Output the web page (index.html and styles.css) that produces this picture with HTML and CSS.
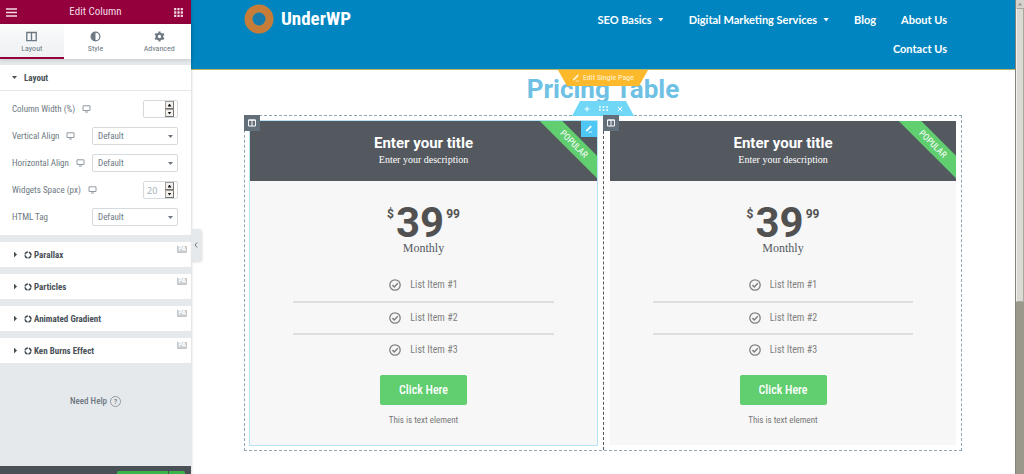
FILE: index.html
```html
<!DOCTYPE html>
<html lang="en">
<head>
<meta charset="utf-8">
<title>Edit Column</title>
<link rel="stylesheet" href="styles.css">
</head>
<body>
<svg class="defs" aria-hidden="true">
  <symbol id="columns" viewBox="0 0 10 10"><path d="M.7 1.2h8.6v7.6H.7zM5 1v8M.5 1.4h9" fill="none" stroke="currentColor" stroke-width="1.2"/></symbol>
  <symbol id="monitor" viewBox="0 0 9 8"><path d="M1 .8h7v4.7H1zM3 7h3" fill="none" stroke="currentColor" stroke-width="1"/></symbol>
  <symbol id="pencil" viewBox="0 0 10 10"><path d="M1 8.2l.6-2.2L7 .6l1.6 1.6L3.2 7.6z" fill="currentColor"/><path d="M4.5 8.8H9" stroke="currentColor"/></symbol>
  <symbol id="premium" viewBox="0 0 10 10"><circle cx="5" cy="5" r="3.7" fill="none" stroke="currentColor" stroke-width="2" stroke-dasharray="4.6 1.21" stroke-dashoffset="-.6"/></symbol>
  <symbol id="check" viewBox="0 0 12 12"><circle cx="6" cy="6" r="5.2" fill="none" stroke="currentColor" stroke-width="1.3"/><path d="M3.4 6.1l1.9 1.9 3.5-3.7" fill="none" stroke="currentColor" stroke-width="1.5"/></symbol>
</svg>
<div class="app">
  <aside class="panel">
    <header class="panel-head">
      <button class="icon-btn" aria-label="Menu"><svg width="11" height="9" viewBox="0 0 11 9"><path d="M0 1h11M0 4.5h11M0 8h11" stroke="currentColor" stroke-width="1.6"/></svg></button>
      <h1>Edit Column</h1>
      <button class="icon-btn" aria-label="Widgets"><svg width="9" height="9" viewBox="0 0 9 9"><path d="M1.2 0v9M4.5 0v9M7.8 0v9" stroke="currentColor" stroke-width="2.2" stroke-dasharray="2.3 1.05"/></svg></button>
    </header>
    <nav class="tabs">
      <button class="tab active"><svg width="11" height="11"><use href="#columns"/></svg>Layout</button>
      <button class="tab"><svg width="11" height="11" viewBox="0 0 10 10"><circle cx="5" cy="5" r="4" fill="none" stroke="currentColor" stroke-width="1.1"/><path d="M5 1a4 4 0 0 0 0 8z" fill="currentColor"/></svg>Style</button>
      <button class="tab"><svg width="11" height="11" viewBox="0 0 10 10"><circle cx="5" cy="5" r="2.5" fill="none" stroke="currentColor" stroke-width="2"/><path d="M5 .4v2M5 7.6v2M1 2.7l1.8 1M7.2 6.3l1.8 1M1 7.3l1.8-1M7.2 3.7l1.8-1" stroke="currentColor" stroke-width="2"/></svg>Advanced</button>
    </nav>
    <div class="sections">
      <section class="section open">
        <h2 class="section-title"><i class="arrow down"></i>Layout</h2>
        <div class="controls">
          <div class="control"><label for="width">Column Width (%)</label><svg class="device" width="9" height="8"><use href="#monitor"/></svg>
            <span class="number"><input id="width" type="text" inputmode="numeric"><span class="spin"><button aria-label="Increase width"><i class="tri up"></i></button><button aria-label="Decrease width"><i class="tri"></i></button></span></span></div>
          <div class="control"><label for="valign">Vertical Align</label><svg class="device" width="9" height="8"><use href="#monitor"/></svg>
            <span class="select"><select id="valign"><option>Default</option></select></span></div>
          <div class="control"><label for="halign">Horizontal Align</label><svg class="device" width="9" height="8"><use href="#monitor"/></svg>
            <span class="select"><select id="halign"><option>Default</option></select></span></div>
          <div class="control"><label for="space">Widgets Space (px)</label><svg class="device" width="9" height="8"><use href="#monitor"/></svg>
            <span class="number"><input id="space" type="text" inputmode="numeric" placeholder="20"><span class="spin"><button aria-label="Increase space"><i class="tri up"></i></button><button aria-label="Decrease space"><i class="tri"></i></button></span></span></div>
          <div class="control"><label for="tag">HTML Tag</label>
            <span class="select"><select id="tag"><option>Default</option></select></span></div>
        </div>
      </section>
      <section class="section"><h2 class="section-title"><i class="arrow"></i><svg width="8" height="8"><use href="#premium"/></svg>Parallax<span class="pa">PA</span></h2></section>
      <section class="section"><h2 class="section-title"><i class="arrow"></i><svg width="8" height="8"><use href="#premium"/></svg>Particles<span class="pa">PA</span></h2></section>
      <section class="section"><h2 class="section-title"><i class="arrow"></i><svg width="8" height="8"><use href="#premium"/></svg>Animated Gradient<span class="pa">PA</span></h2></section>
      <section class="section"><h2 class="section-title"><i class="arrow"></i><svg width="8" height="8"><use href="#premium"/></svg>Ken Burns Effect<span class="pa">PA</span></h2></section>
    </div>
    <a class="help" href="#">Need Help <span class="help-mark">?</span></a>
    <footer class="panel-foot"><span class="publish"></span><span class="publish more"></span></footer>
    <button class="collapse" aria-label="Hide panel"><svg width="4" height="6" viewBox="0 0 4 6"><path d="M3.2.5L1 3l2.2 2.5" fill="none" stroke="currentColor"/></svg></button>
  </aside>

  <main class="preview">
    <header class="site-head">
      <div class="container head-row">
        <a class="brand" href="#"><svg width="30" height="30" viewBox="0 0 30 30"><circle cx="15" cy="15" r="10.5" fill="none" stroke="#c67d39" stroke-width="8"/><circle cx="15" cy="15" r="5.2" fill="none" stroke="#27759c" stroke-width="1"/><path d="M10.8 12h3M15 12h3M11.7 12.2l2.3 6 1.3-4M13.8 12.2l2.7 6 1.7-5.7" fill="none" stroke="#27759c" stroke-width="1.3"/></svg>UnderWP</a>
        <nav class="menu">
          <a href="#">SEO Basics<i class="caret"></i></a>
          <a href="#">Digital Marketing Services<i class="caret"></i></a>
          <a href="#">Blog</a>
          <a href="#">About Us</a>
          <a href="#">Contact Us</a>
        </nav>
      </div>
    </header>
    <div class="content">
      <h2 class="page-title">Pricing Table</h2>
      <button class="edit-page"><svg width="8" height="8"><use href="#pencil"/></svg>Edit Single Page</button>
      <div class="container pricing">
        <div class="section-tools">
          <button aria-label="Add section"><svg width="6" height="6" viewBox="0 0 6 6"><path d="M3 .5v5M.5 3h5" stroke="currentColor"/></svg></button>
          <button aria-label="Edit section"><svg width="9" height="5" viewBox="0 0 9 5"><path d="M0 1h9M0 4h9" stroke="currentColor" stroke-width="1.4" stroke-dasharray="1.8 1.8"/></svg></button>
          <button aria-label="Delete section"><svg width="6" height="6" viewBox="0 0 6 6"><path d="M.8 .8l4.4 4.4M5.2 .8L.8 5.2" stroke="currentColor"/></svg></button>
        </div>
        <div class="column selected">
          <button class="grip" aria-label="Edit column"><svg width="8" height="8"><use href="#columns"/></svg></button>
          <article class="card">
            <button class="widget-edit" aria-label="Edit pricing table"><svg width="8" height="8"><use href="#pencil"/></svg></button>
            <header class="card-head"><h3>Enter your title</h3><p>Enter your description</p><span class="ribbon">POPULAR</span></header>
            <div class="price"><span class="sign">$</span><span class="amount">39</span><span class="cents">99</span></div>
            <p class="period">Monthly</p>
            <ul class="features">
              <li><svg width="12" height="12"><use href="#check"/></svg>List Item #1</li>
              <li><svg width="12" height="12"><use href="#check"/></svg>List Item #2</li>
              <li><svg width="12" height="12"><use href="#check"/></svg>List Item #3</li>
            </ul>
            <a class="cta" href="#">Click Here</a>
            <p class="note">This is text element</p>
          </article>
        </div>
        <div class="column">
          <button class="grip" aria-label="Edit column"><svg width="8" height="8"><use href="#columns"/></svg></button>
          <article class="card">
            <header class="card-head"><h3>Enter your title</h3><p>Enter your description</p><span class="ribbon">POPULAR</span></header>
            <div class="price"><span class="sign">$</span><span class="amount">39</span><span class="cents">99</span></div>
            <p class="period">Monthly</p>
            <ul class="features">
              <li><svg width="12" height="12"><use href="#check"/></svg>List Item #1</li>
              <li><svg width="12" height="12"><use href="#check"/></svg>List Item #2</li>
              <li><svg width="12" height="12"><use href="#check"/></svg>List Item #3</li>
            </ul>
            <a class="cta" href="#">Click Here</a>
            <p class="note">This is text element</p>
          </article>
        </div>
      </div>
    </div>
  </main>
  <div class="scrollbar" aria-hidden="true"><span class="scroll-up"><i class="tri up"></i></span><span class="thumb"></span></div>
</div>
</body>
</html>
```
FILE: styles.css
```css
* { box-sizing: border-box; }
body { margin: 0; font-family: Roboto, "Liberation Sans", sans-serif; background: #fff; }
h1, h2, h3, p, ul { margin: 0; padding: 0; }
button { border: 0; padding: 0; background: none; color: inherit; font: inherit; }
a { color: inherit; text-decoration: none; }
svg { display: block; flex: none; }
.defs { position: absolute; width: 0; height: 0; }
.app { display: flex; height: 100vh; overflow: hidden; }
.panel, .edit-page, .ribbon, .features, .cta, .note { font-family: "Roboto Condensed", Roboto, sans-serif; }

/* Editor panel */
.panel { position: relative; z-index: 5; flex: none; width: 191px; display: flex; flex-direction: column; background: #e6e9ec; box-shadow: 0 0 3px rgba(0,0,0,.25); color: #6d7882; font-size: 9px; }
.panel-head { display: flex; flex: none; align-items: center; justify-content: space-between; height: 24px; padding: 0 8px 0 6px; background: #93003c; color: #f3dbe4; }
.panel-head h1 { font-size: 11px; font-weight: 400; line-height: 22px; }
.icon-btn { display: flex; }
.tabs { display: grid; flex: none; grid-template-columns: repeat(3, 1fr); height: 35px; background: #fff; box-shadow: 0 1px 4px rgba(0,0,0,.15); }
.tab { display: flex; flex-direction: column; align-items: center; gap: 2px; padding-top: 7px; font-size: 8px; line-height: 10px; }
.tab.active { background: linear-gradient(#fafbfb, #eef0f2); border-bottom: 2px solid #93003c; }
.sections { display: grid; gap: 7px; margin-top: 6px; }
.section { background: #fff; }
.section-title { display: flex; align-items: center; gap: 2px; height: 25px; padding: 0 4px 0 14px; color: #495157; font-size: 9px; font-weight: 700; line-height: 12px; }
.open .section-title { border-bottom: 1px solid #e6e9ec; height: 26px; padding-left: 12px; }
.arrow { width: 3px; height: 6px; margin-right: 5px; background: currentColor; clip-path: polygon(0 0, 100% 50%, 0 100%); }
.arrow.down { width: 5px; height: 3px; clip-path: polygon(0 0, 100% 0, 50% 100%); }
.pa { align-self: flex-start; margin: 4px 0 0 auto; padding: 0 1px; background: #c6c9cb; color: #fff; font-size: 7px; line-height: 7px; }
.controls { display: grid; gap: 9px; padding: 9px 13px 9px 12px; }
.control { display: flex; align-items: center; height: 18px; white-space: nowrap; }
.device { margin-left: 7px; color: #929ba3; }
.select, .number { position: relative; display: flex; height: 18px; margin-left: auto; border: 1px solid #d5dadf; border-radius: 2px; background: #fff; }
.select { width: 86px; }
.select::after { content: ""; position: absolute; right: 4px; top: 7px; width: 5px; height: 3px; background: #6d7882; clip-path: polygon(0 0, 100% 0, 50% 100%); pointer-events: none; }
.select select { appearance: none; width: 100%; border: 0; padding: 0 5px; background: none; color: #6d7882; font: inherit; outline: 0; }
.number { width: 35px; padding-right: 3px; }
.number input { width: 21px; min-width: 0; border: 0; padding: 0 3px; background: none; font: 9px "Noto Sans", sans-serif; color: #6d7882; outline: 0; }
.number input::placeholder { color: #a4afb7; }
.spin { display: grid; flex: 1; grid-template-rows: 1fr 1fr; }
.spin button { display: grid; place-items: center; border: 1px solid #a29e95; border-right-color: #77736d; border-bottom-color: #77736d; background: #f2f1ef; }
.tri { width: 4px; height: 3px; background: #111; clip-path: polygon(0 0, 100% 0, 50% 100%); }
.tri.up { clip-path: polygon(50% 0, 100% 100%, 0 100%); }
.help { display: flex; align-items: center; justify-content: center; gap: 3px; margin-top: 32px; font-weight: 500; line-height: 12px; }
.help-mark { width: 11px; height: 11px; border: 1px solid #929ba3; border-radius: 50%; font-size: 8px; line-height: 9px; text-align: center; }
.panel-foot { display: flex; flex: none; gap: 1px; justify-content: flex-end; height: 8px; margin-top: auto; padding: 5px 6px 0 0; background: #495157; }
.publish { width: 51px; background: #39b54a; border-top-left-radius: 2px; }
.publish.more { width: 16px; border-radius: 0 2px 0 0; }
.collapse { position: absolute; left: 100%; top: 229px; display: grid; place-items: center; width: 10px; height: 32px; background: #e6e9ec; border-radius: 0 2px 2px 0; box-shadow: 1px 1px 3px rgba(0,0,0,.15); }

/* Site preview */
.preview { flex: 1; min-width: 0; }
.container { width: calc(100% - 32px); max-width: 718px; margin: 0 auto; }
.site-head { background: #0085c0; border-bottom: 1px solid #b5b565; color: #fff; }
.head-row { display: flex; justify-content: space-between; align-items: flex-start; padding: 4px 15px 6px 0; }
.brand { display: flex; align-items: center; gap: 7px; font: 700 19px/30px "Roboto Condensed", Roboto, sans-serif; }
.menu { display: flex; flex: 0 1 380px; flex-wrap: wrap; justify-content: flex-end; gap: 0 25px; padding-top: 1px; font: 700 11px/29px Lato, sans-serif; }
.menu a { display: flex; align-items: center; }
.caret { width: 6px; height: 4px; margin-left: 6px; background: currentColor; clip-path: polygon(0 0, 100% 0, 50% 100%); }
.content { position: relative; }
.page-title { padding: 4px 0 11px; color: #6ec1e4; font-size: 26px; font-weight: 700; line-height: 30px; text-align: center; }
.edit-page { position: absolute; top: 0; left: 50%; transform: translateX(-50%); display: flex; align-items: center; justify-content: center; gap: 3px; width: 90px; height: 16px; background: #fcb92c; clip-path: polygon(0 0, 100% 0, 90% 100%, 10% 100%); color: #fff4d8; font-size: 8px; line-height: 16px; white-space: nowrap; }
.pricing { position: relative; display: grid; grid-template-columns: 1fr 1fr; border: 1px dashed #93a6b1; }
.section-tools { position: absolute; bottom: 100%; left: 50%; transform: translateX(-50%); display: flex; align-items: center; justify-content: center; gap: 9px; width: 62px; height: 15px; background: #71d7f7; clip-path: polygon(13% 0, 87% 0, 100% 100%, 0 100%); color: #fff; }
.column { position: relative; min-width: 0; padding: 5px 6px 5px 5px; }
.column + .column { border-left: 1px dashed #515962; padding: 5px 5px 5px 6px; }
.grip, .widget-edit { position: absolute; z-index: 2; display: grid; place-items: center; width: 16px; height: 16px; color: #fff; }
.grip { top: -1px; left: -1px; background: #626e79; }
.widget-edit { top: 0; right: 0; background: #4fc7f5; }
.card { position: relative; display: flex; flex-direction: column; align-items: center; padding-bottom: 18px; background: #f7f7f7; color: #54595f; }
.selected .card { outline: 1px solid #b5e5f5; }
.card-head { position: relative; overflow: hidden; align-self: stretch; height: 60px; padding-top: 12px; background: #54595f; color: #fff; text-align: center; }
.card-head h3 { font-size: 15px; font-weight: 700; line-height: 20px; }
.card-head p { font: 10px/14px "Roboto Slab", "Liberation Serif", serif; }
.ribbon { position: absolute; top: 15px; right: -27px; width: 100px; height: 16px; background: #61ce70; transform: rotate(45deg); font-size: 9px; line-height: 16px; }
.price { display: flex; align-items: flex-start; gap: 2px; padding-top: 23px; color: #515151; font-weight: 700; }
.sign, .cents { padding-top: 2px; font-size: 12px; line-height: 16px; }
.amount { font-size: 42px; line-height: 38px; }
.period { font: 12px/12px "Roboto Slab", "Liberation Serif", serif; }
.features { width: 75%; margin-top: 15px; list-style: none; color: #808080; font-size: 10px; }
.features li { display: flex; align-items: center; justify-content: center; gap: 9px; height: 32px; line-height: 16px; }
.features li + li { border-top: 2px solid #dedede; }
.cta { margin-top: 10px; padding: 0 19px; border-radius: 2px; background: #61ce70; color: #fff; font-size: 12px; font-weight: 500; line-height: 30px; }
.note { margin-top: 8px; color: #777; font-size: 9px; line-height: 14px; }

/* Window scrollbar */
.scrollbar { flex: none; width: 9px; display: flex; flex-direction: column; border-left: 1px solid #85827c; background: #9a978b; }
.scroll-up { display: grid; place-items: center; height: 8px; background: #d5d2cd; }
.scroll-up .tri { background: #98958f; }
.thumb { height: 62%; border: 1px solid #aaa79f; border-left-color: #f0efed; background: #dbd9d4; }
```
